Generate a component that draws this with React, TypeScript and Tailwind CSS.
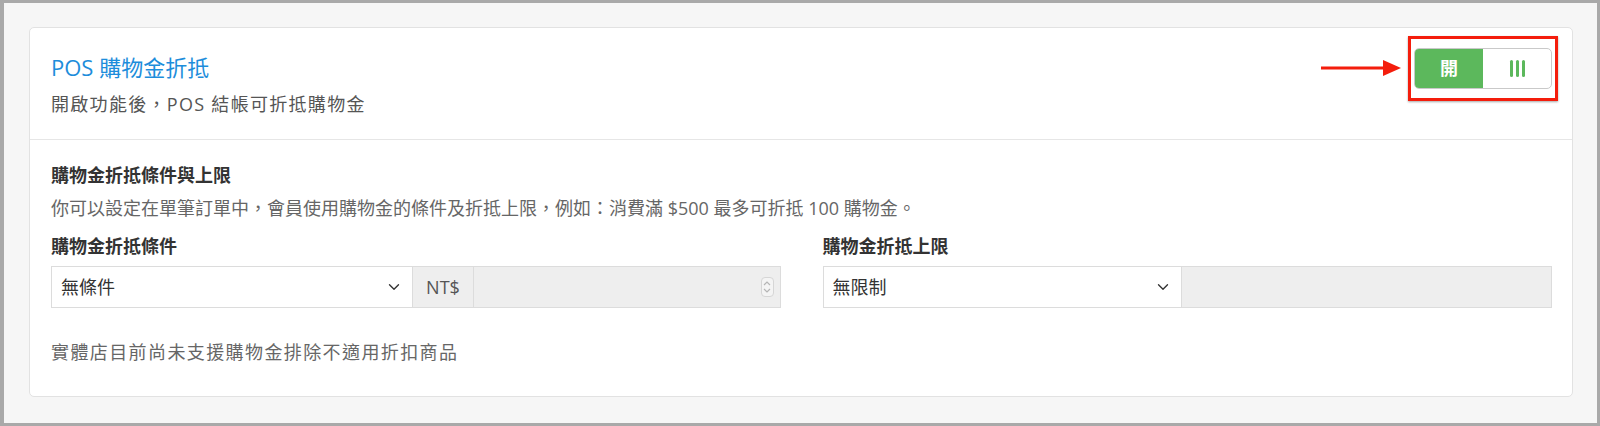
// POS 購物金折抵 設定卡片 — 開關 + 折抵條件與上限

import { ChevronDown } from "lucide-react";

const FONT = { fontFamily: '"Open Sans", "Noto Sans CJK TC", sans-serif' };

function Toggle() {
  return (
    <div className="relative -mt-px">
      {/* 標註：紅色箭頭 + 紅框 */}
      <svg
        className="absolute -left-[93px] top-[11px] h-[18px] w-[80px]"
        viewBox="0 0 80 18"
        fill="none"
      >
        <line x1="0" y1="9" x2="64" y2="9" stroke="#f41d0c" strokeWidth="3" />
        <polygon points="62,1 80,9 62,17" fill="#f41d0c" />
      </svg>
      <div className="pointer-events-none absolute -bottom-3 -left-[6px] -right-[6px] -top-3 border-[3px] border-[#f41d0c] shadow-[0_1px_2px_rgba(0,0,0,0.35)]" />

      <div className="flex h-[41px] w-[138px] overflow-hidden rounded-[5px] border border-[#c9c9c9] bg-white">
        <div className="flex w-[68px] items-center justify-center bg-[#5cb85c] text-[18px] font-bold text-white">
          開
        </div>
        <div className="flex flex-1 items-center justify-center gap-[3px]">
          <span className="h-[17px] w-[3px] rounded-full bg-[#5cb85c]" />
          <span className="h-[17px] w-[3px] rounded-full bg-[#5cb85c]" />
          <span className="h-[17px] w-[3px] rounded-full bg-[#5cb85c]" />
        </div>
      </div>
    </div>
  );
}

function SelectBox({ value, width }: { value: string; width: string }) {
  return (
    <div
      className={`flex h-full shrink-0 items-center justify-between border border-[#dcdcdc] bg-white pl-[9px] pr-[9px] text-[18px] text-[#333] ${width}`}
    >
      <span>{value}</span>
      <ChevronDown className="size-[18px] text-[#333]" strokeWidth={1.8} />
    </div>
  );
}

function Spinner() {
  return (
    <div className="flex h-[20px] w-[13px] flex-col items-center justify-center rounded-[4px] border border-[#d6d6d6] bg-[#f4f4f4]">
      <svg viewBox="0 0 10 16" className="h-[16px] w-[10px]" fill="none" stroke="#b5b5b5" strokeWidth="1.2">
        <polyline points="2,6 5,3 8,6" />
        <polyline points="2,10 5,13 8,10" />
      </svg>
    </div>
  );
}

export default function App() {
  return (
    <div
      className="h-[426px] w-full border-[3px] border-l-4 border-[#a9a9a9] bg-[#f6f6f6] pb-6 pl-[25px] pr-6 pt-6"
      style={FONT}
    >
      <div className="rounded-[5px] border border-[#e2e2e2] bg-white">
        <div className="flex items-start justify-between border-b border-[#e6e6e6] pb-[22px] pl-[21px] pr-5 pt-[21px]">
          <div>
            <h1 className="mt-[3px] text-[22px] leading-[30px] text-[#1d8ddb]">POS 購物金折抵</h1>
            <p className="mt-[9px] text-[18px] leading-[26px] tracking-[1.3px] text-[#555]">
              開啟功能後，POS 結帳可折抵購物金
            </p>
          </div>
          <Toggle />
        </div>

        <div className="pb-[31px] pl-[21px] pr-5 pt-[22px]">
          <h2 className="text-[18px] font-bold leading-[26px] text-[#333]">購物金折抵條件與上限</h2>
          <p className="mt-[7px] text-[18px] leading-[26px] text-[#666]">
            你可以設定在單筆訂單中，會員使用購物金的條件及折抵上限，例如：消費滿 $500 最多可折抵 100 購物金。
          </p>

          <div className="mt-[12px] grid grid-cols-2 gap-x-[42px]">
            <div>
              <label className="block text-[18px] font-bold leading-[26px] text-[#333]">購物金折抵條件</label>
              <div className="mt-[7px] flex h-[42px]">
                <SelectBox value="無條件" width="w-[362px]" />
                <div className="flex w-[61px] shrink-0 items-center justify-center border-y border-r border-[#dcdcdc] bg-[#eeeeee] text-[18px] text-[#555]">
                  NT$
                </div>
                <div className="flex flex-1 items-center justify-end border-y border-r border-[#dcdcdc] bg-[#eeeeee] pr-[6px]">
                  <Spinner />
                </div>
              </div>
            </div>
            <div>
              <label className="block text-[18px] font-bold leading-[26px] text-[#333]">購物金折抵上限</label>
              <div className="mt-[7px] flex h-[42px]">
                <SelectBox value="無限制" width="w-[359px]" />
                <div className="flex-1 border-y border-r border-[#dcdcdc] bg-[#eeeeee]" />
              </div>
            </div>
          </div>

          <p className="mt-[31px] text-[18px] leading-[26px] tracking-[1.4px] text-[#666]">
            實體店目前尚未支援購物金排除不適用折扣商品
          </p>
        </div>
      </div>
    </div>
  );
}
